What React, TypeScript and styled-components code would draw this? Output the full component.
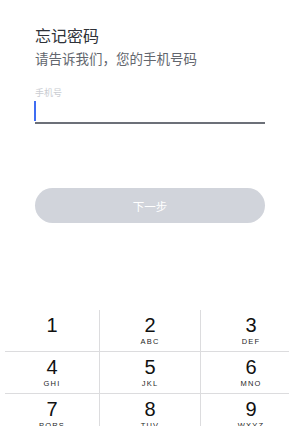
import React from 'react';
import styled, { createGlobalStyle } from 'styled-components';

const GlobalStyle = createGlobalStyle`
  html, body {
    margin: 0;
    padding: 0;
    background: #ffffff;
    overflow: hidden;
  }
  body {
    font-family: "Noto Sans CJK SC", "Liberation Sans", sans-serif;
  }
`;

const keys = [
  { digit: '1', letters: '' },
  { digit: '2', letters: 'ABC' },
  { digit: '3', letters: 'DEF' },
  { digit: '4', letters: 'GHI' },
  { digit: '5', letters: 'JKL' },
  { digit: '6', letters: 'MNO' },
  { digit: '7', letters: 'PQRS' },
  { digit: '8', letters: 'TUV' },
  { digit: '9', letters: 'WXYZ' },
  { digit: '', letters: '' },
  { digit: '0', letters: '' },
  { digit: '', letters: '' },
];

const App: React.FC = () => {
  return (
    <>
      <GlobalStyle />
      <Page>
        <Form>
          <Title>忘记密码</Title>
          <Subtitle>请告诉我们，您的手机号码</Subtitle>
          <Label>手机号</Label>
          <Field>
            <Cursor />
          </Field>
          <NextButton disabled>下一步</NextButton>
        </Form>
        <KeypadWrap>
          <Keypad>
            {keys.map((k, i) => (
              <Key key={i}>
                <Digit>{k.digit}</Digit>
                <Letters>{k.letters}</Letters>
              </Key>
            ))}
          </Keypad>
        </KeypadWrap>
      </Page>
    </>
  );
};

export default App;

const Page = styled.div`
  width: 289px;
  height: 426px;
  display: flex;
  flex-direction: column;
  overflow: hidden;
`;

const Form = styled.div`
  display: flex;
  flex-direction: column;
  padding: 24px 24px 0 35px;
`;

const Title = styled.h1`
  margin: 0;
  font-size: 16px;
  line-height: 22px;
  font-weight: 400;
  color: #2f3238;
`;

const Subtitle = styled.p`
  margin: 2px 0 0;
  font-size: 13.5px;
  line-height: 20px;
  color: #62666e;
`;

const Label = styled.div`
  margin-top: 19px;
  font-size: 9px;
  line-height: 12px;
  color: #c9ccd1;
`;

const Field = styled.div`
  height: 22px;
  display: flex;
  align-items: flex-end;
  padding-bottom: 1px;
  border-bottom: 2px solid #6c7078;
`;

const Cursor = styled.span`
  width: 2px;
  height: 20px;
  margin-left: -1px;
  background: #3f6df2;
`;

const NextButton = styled.button`
  margin-top: 64px;
  height: 35px;
  border: none;
  border-radius: 18px;
  background: #d1d4db;
  color: #ffffff;
  font-family: "Noto Sans CJK SC", sans-serif;
  font-size: 11.5px;
  padding: 0;
`;

const KeypadWrap = styled.div`
  margin-top: 87px;
  padding-left: 5px;
  overflow: hidden;
`;

const Keypad = styled.div`
  width: 296px;
  display: grid;
  grid-template-columns: 94px 100px 100px;
  grid-template-rows: 41px 41px 41px 41px;
  row-gap: 1px;
  column-gap: 1px;
  background: #dcdcde;
`;

const Key = styled.div`
  background: #ffffff;
  display: flex;
  flex-direction: column;
  align-items: center;
  padding-top: 4px;
`;

const Digit = styled.div`
  font-family: "Liberation Sans", Arial, sans-serif;
  font-size: 20px;
  line-height: 22px;
  color: #111111;
`;

const Letters = styled.div`
  margin-top: 1px;
  font-family: "Liberation Sans", Arial, sans-serif;
  font-size: 7.5px;
  line-height: 9px;
  letter-spacing: 1.2px;
  color: #1f1f1f;
`;
